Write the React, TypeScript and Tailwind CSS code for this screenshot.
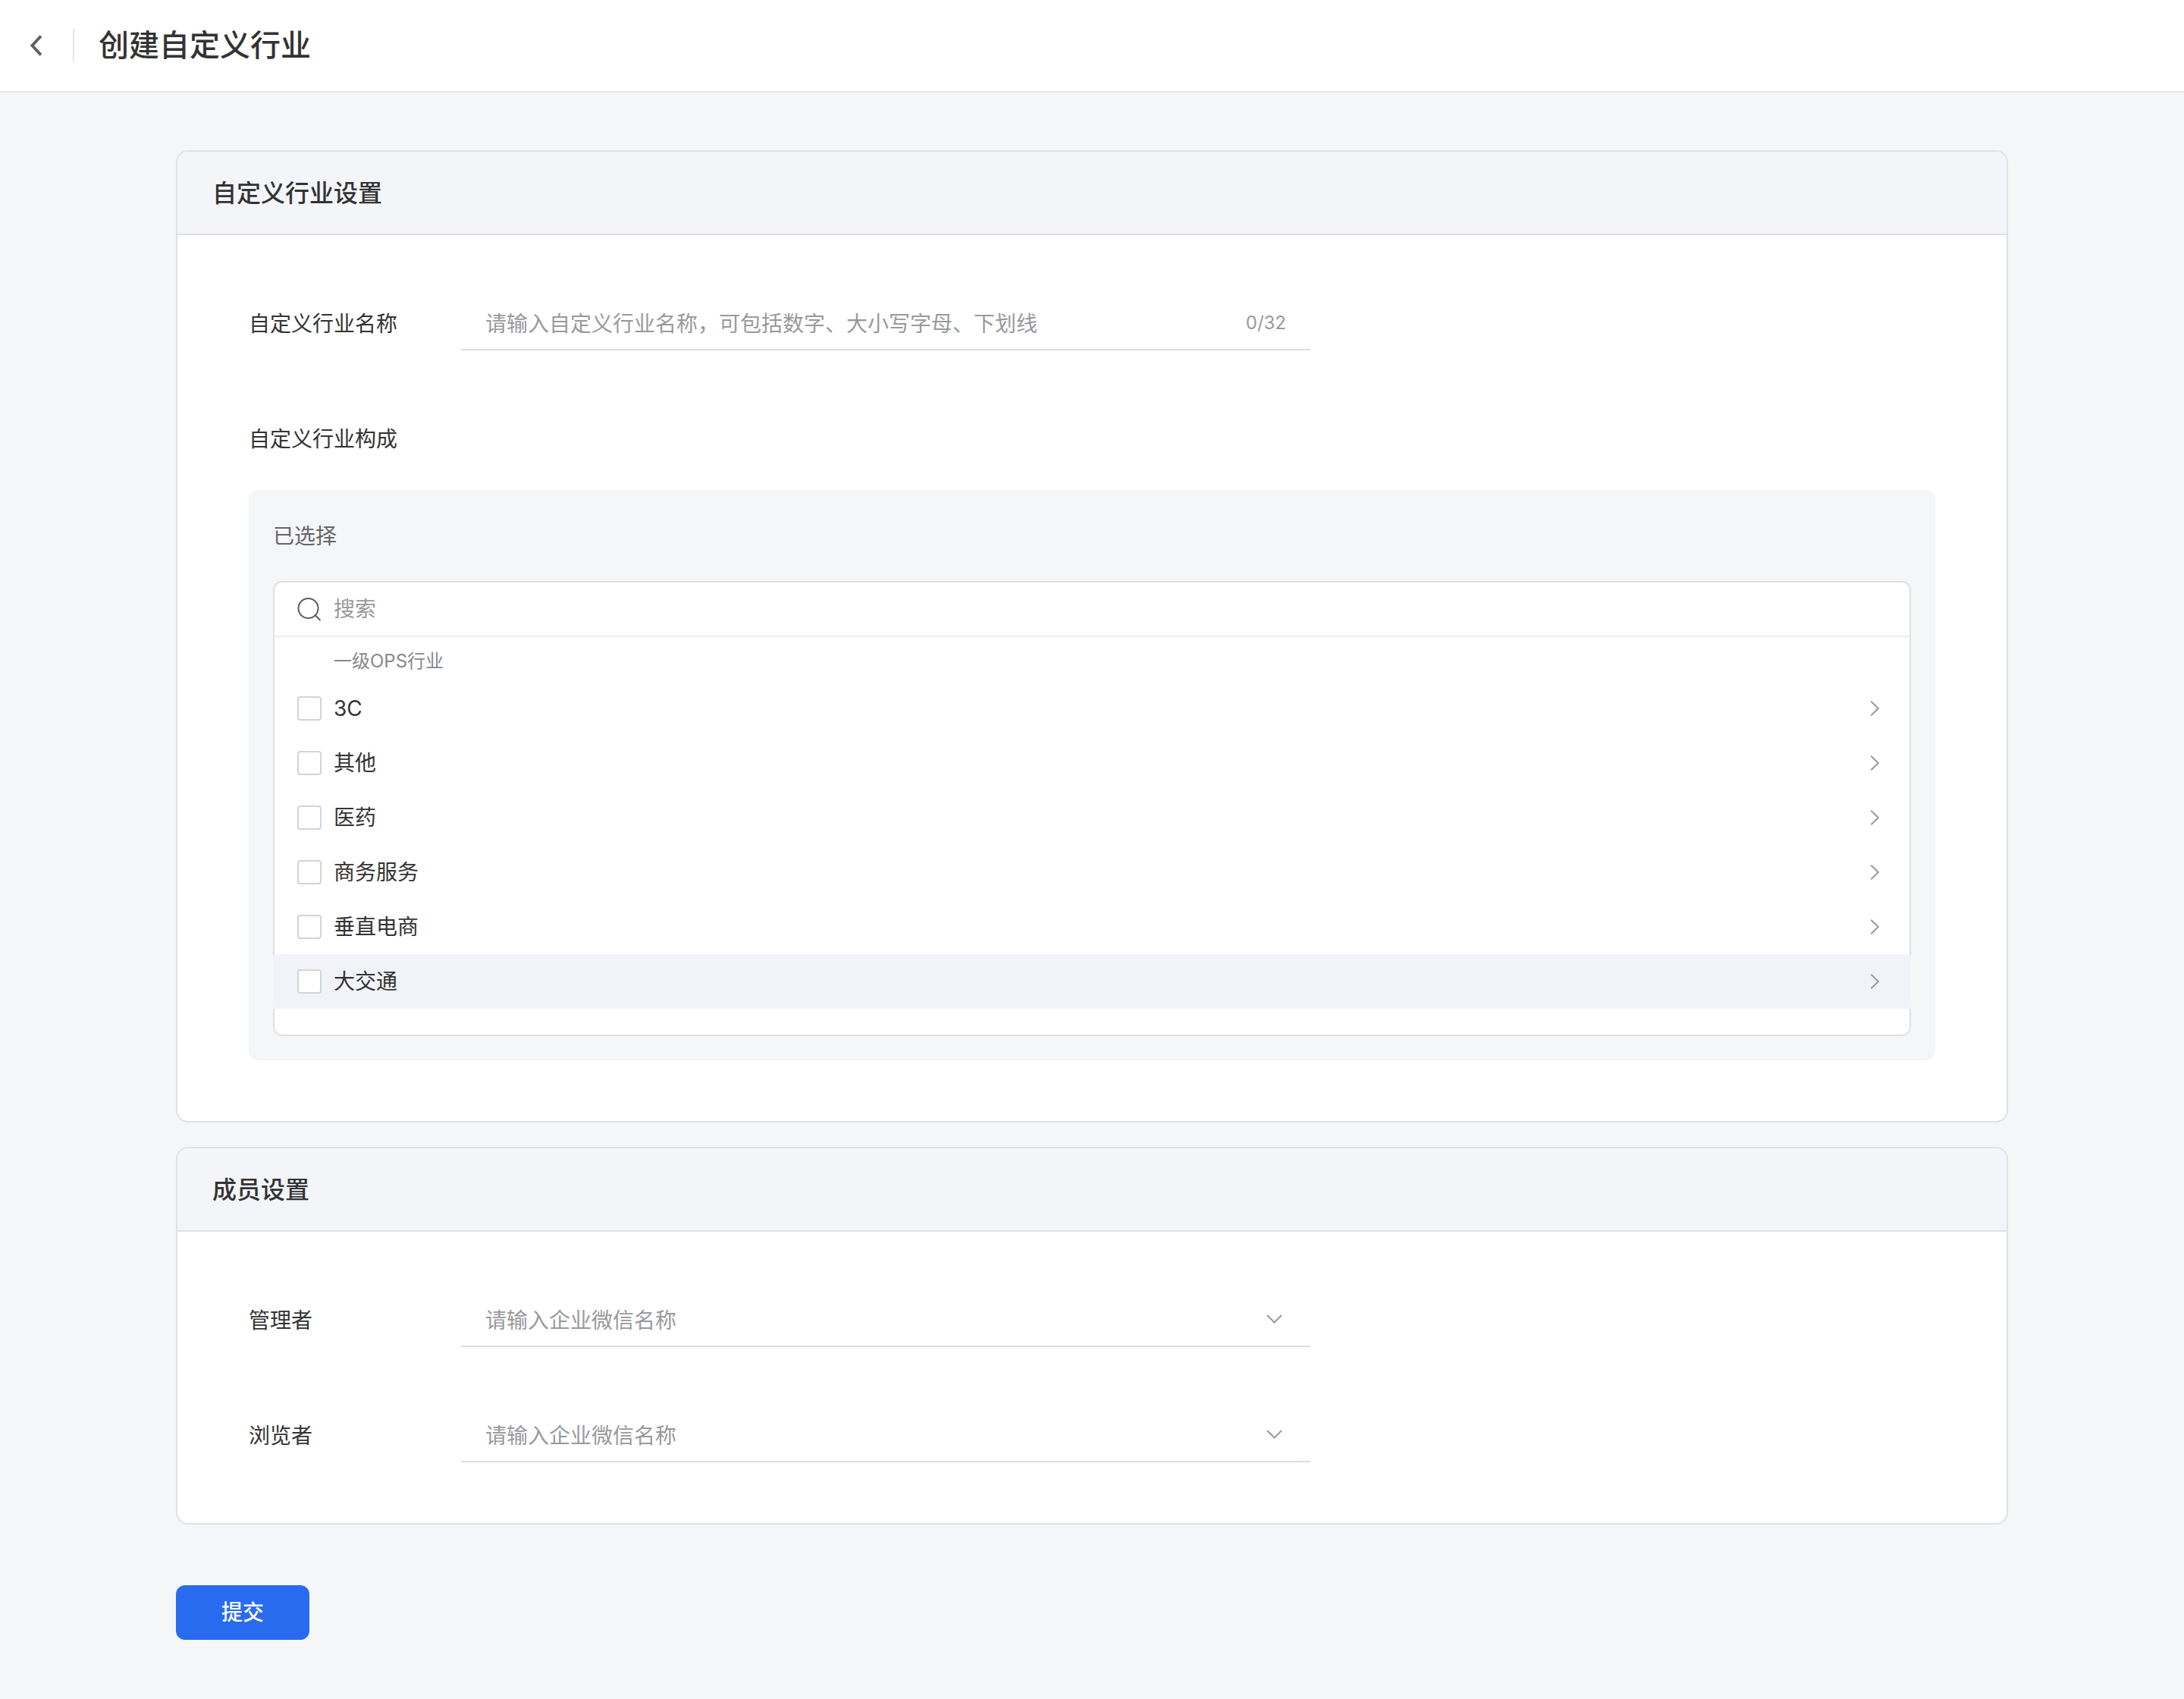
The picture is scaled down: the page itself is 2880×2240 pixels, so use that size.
import { useState } from 'react'
import type { ReactNode } from 'react'

const industries = ['3C', '其他', '医药', '商务服务', '垂直电商', '大交通']

const MAX_NAME = 32

function ChevronLeft() {
  return (
    <svg width="32" height="32" viewBox="0 0 32 32" fill="none" stroke="#5f6064" strokeWidth="4">
      <path d="M22 3.5 10.5 16 22 28.5" />
    </svg>
  )
}

function ChevronRight() {
  return (
    <svg width="32" height="32" viewBox="0 0 32 32" fill="none" stroke="#98999d" strokeWidth="2">
      <path d="m11.3 6.7 9.5 9.3-9.5 9.3" />
    </svg>
  )
}

function ChevronDown() {
  return (
    <svg width="32" height="32" viewBox="0 0 32 32" fill="none" stroke="#98999d" strokeWidth="2">
      <path d="m7 11 9.5 9.5L26 11" />
    </svg>
  )
}

function SearchIcon() {
  return (
    <svg width="32" height="32" viewBox="0 0 32 32" fill="none" stroke="#5f6064" strokeWidth="2">
      <circle cx="14.5" cy="15" r="13" />
      <path d="m23.7 24.2 6.8 6.8" />
    </svg>
  )
}

function Card({ title, children }: { title: string; children: ReactNode }) {
  return (
    <section className="overflow-hidden rounded-2xl border-2 border-[#dfe1e6] bg-white">
      <h2 className="flex h-[110px] items-center border-b-2 border-[#dfe1e6] bg-[#f3f5f9] px-[46px] pt-0.5 text-[32px] font-medium">
        {title}
      </h2>
      <div className="px-[94px] py-20">{children}</div>
    </section>
  )
}

function MemberSelect({ id, label }: { id: string; label: string }) {
  return (
    <div className="flex h-[72px]">
      <label htmlFor={id} className="flex w-[280px] shrink-0 items-center pt-0.5">
        {label}
      </label>
      <div className="relative w-full max-w-[1120px] border-b-2 border-[#dcdde3]">
        <select id={id} className="h-full w-full appearance-none bg-transparent px-8 pt-1 text-[#98999d] outline-none">
          <option value="">请输入企业微信名称</option>
        </select>
        <span className="pointer-events-none absolute inset-y-0 right-8 flex items-center">
          <ChevronDown />
        </span>
      </div>
    </div>
  )
}

export default function App() {
  const [name, setName] = useState('')
  const [checked, setChecked] = useState<string[]>([])
  const [active, setActive] = useState('大交通')

  function toggle(item: string) {
    setChecked((prev) => (prev.includes(item) ? prev.filter((i) => i !== item) : [...prev, item]))
  }

  return (
    <div className="min-h-screen bg-[#f4f6f8] font-[Inter,'Noto_Sans_CJK_SC',sans-serif] text-[28px] leading-10 text-[#333333]">
      <header className="flex h-[122px] items-center border-b-2 border-[#e5e6eb] bg-white px-8">
        <button type="button" aria-label="返回" className="flex w-8 items-center">
          <ChevronLeft />
        </button>
        <div className="mx-8 h-11 w-0.5 bg-[#e5e6eb]" />
        <h1 className="text-[40px] font-medium">创建自定义行业</h1>
      </header>

      <main className="mx-[232px] pt-[76px] pb-[78px]">
        <div className="space-y-8">
          <Card title="自定义行业设置">
            <div className="flex h-[72px]">
              <label htmlFor="name" className="flex w-[280px] shrink-0 items-center pt-0.5">
                自定义行业名称
              </label>
              <div className="flex w-full max-w-[1120px] items-center border-b-2 border-[#dcdde3] px-8">
                <input
                  id="name"
                  value={name}
                  maxLength={MAX_NAME}
                  onChange={(e) => setName(e.target.value)}
                  placeholder="请输入自定义行业名称，可包括数字、大小写字母、下划线"
                  className="h-full flex-1 pt-1 outline-none placeholder:text-[#98999d]"
                />
                <span className="pt-0.5 text-[24px] text-[#98999d]">
                  {name.length}/{MAX_NAME}
                </span>
              </div>
            </div>

            <h3 className="mt-20 flex h-[72px] items-center pt-0.5">自定义行业构成</h3>

            <div className="mt-8 rounded-xl bg-[#f4f6f8] px-8 pb-8">
              <div className="flex h-[120px] items-center pt-0.5 text-[#666666]">已选择</div>
              <div className="rounded-xl border-2 border-[#dfe1e6] bg-white pb-[34px]">
                <div className="flex h-[72px] items-center gap-4 border-b-2 border-[#ecedf1] px-[30px]">
                  <SearchIcon />
                  <input
                    type="search"
                    aria-label="搜索"
                    placeholder="搜索"
                    className="h-full flex-1 outline-none placeholder:text-[#98999d]"
                  />
                </div>
                <div className="flex h-[58px] items-center pt-1.5 pl-[78px] text-[24px] text-[#888888]">一级OPS行业</div>
                <ul>
                  {industries.map((item) => (
                    <li
                      key={item}
                      onMouseEnter={() => setActive(item)}
                      className={`-mx-0.5 flex h-[72px] items-center px-8 ${
                        active === item ? 'relative bg-[#f2f3f8]' : ''
                      }`}
                    >
                      <label className="flex flex-1 items-center gap-4">
                        <input
                          type="checkbox"
                          checked={checked.includes(item)}
                          onChange={() => toggle(item)}
                          className="size-8 appearance-none rounded border-2 border-[#d3d3da] bg-white checked:border-[#296bef] checked:bg-[#296bef]"
                        />
                        {item}
                      </label>
                      <button type="button" aria-label={`展开${item}`}>
                        <ChevronRight />
                      </button>
                    </li>
                  ))}
                </ul>
              </div>
            </div>
          </Card>

          <Card title="成员设置">
            <div className="space-y-20">
              <MemberSelect id="manager" label="管理者" />
              <MemberSelect id="viewer" label="浏览者" />
            </div>
          </Card>
        </div>

        <button type="button" className="mt-20 h-[72px] w-44 rounded-xl bg-[#296bef] font-medium text-white">
          提交
        </button>
      </main>
    </div>
  )
}
